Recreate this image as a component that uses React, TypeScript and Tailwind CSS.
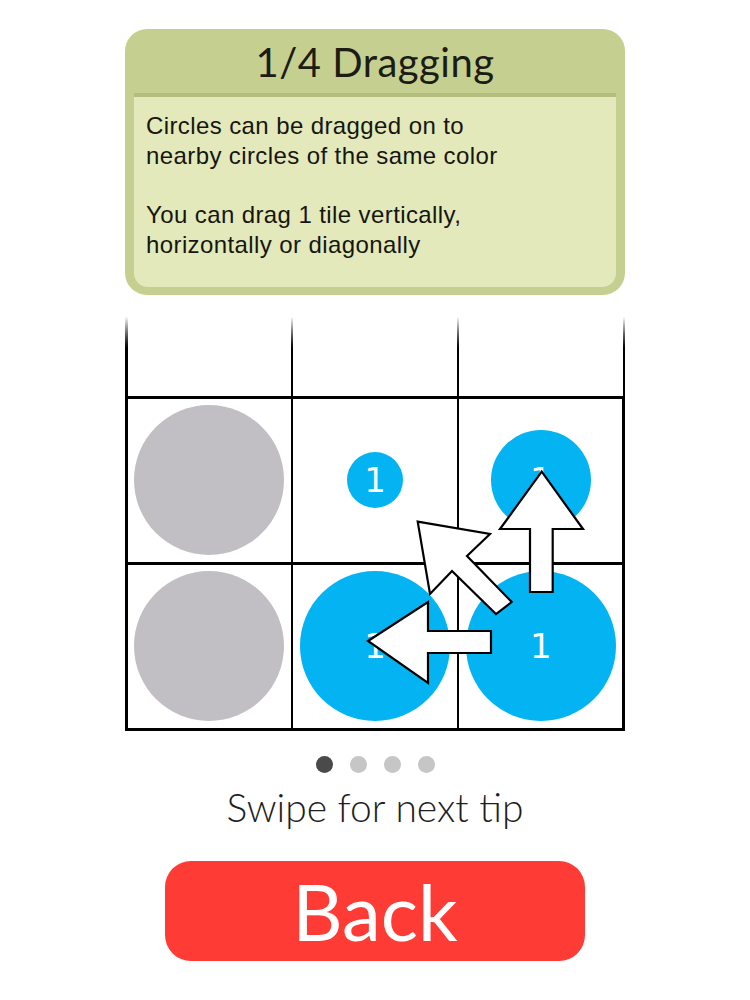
import React from 'react';

const cells = [
  { color: 'gray', size: 'w-[150px] h-[150px]', num: false },
  { color: 'blue', size: 'w-[56px] h-[56px]', num: true },
  { color: 'blue', size: 'w-[100px] h-[100px]', num: true },
  { color: 'gray', size: 'w-[150px] h-[150px]', num: false },
  { color: 'blue', size: 'w-[150px] h-[150px]', num: true },
  { color: 'blue', size: 'w-[150px] h-[150px]', num: true },
];

function Arrows() {
  return (
    <svg
      className="absolute left-0 top-0 pointer-events-none"
      width="500"
      height="415"
      viewBox="125 315 500 415"
    >
      <g fill="#ffffff" stroke="#000000" strokeWidth="2.2" strokeLinejoin="miter">
        <polygon points="417.7,521.7 490,534 467,556 511.7,602 496,614 452,571 430,594" />
        <polygon points="368,641 428,602 428,631 491,631 491,653 428,653 428,683" />
        <polygon points="541.7,471.7 583,529 552.7,529 552.7,592 530,592 530,529 500,529" />
      </g>
    </svg>
  );
}

export default function App() {
  return (
    <div className="w-[750px] h-[1000px] bg-white flex flex-col items-center overflow-hidden">
      {/* tip card */}
      <div className="mt-[29px] w-[500px] h-[266px] rounded-[22px] bg-[#c5d090] px-[9px] pb-[8px] flex flex-col">
        <div className="h-[64px] flex items-center justify-center">
          <h1 className="text-[40px] leading-none text-[#1c1c14] font-[Lato,sans-serif] tracking-[0.5px] mt-[2px]">
            1/4 Dragging
          </h1>
        </div>
        <div className="h-[4px] bg-[#b3bd7c]" />
        <div className="flex-1 bg-[#e3e9bb] rounded-b-[14px] px-[12px] pt-[14px] text-[24px] leading-[29.5px] tracking-[0.4px] text-[#161610] font-['Liberation_Sans',Arial,sans-serif]">
          <p>Circles can be dragged on to</p>
          <p>nearby circles of the same color</p>
          <p className="mt-[30px]">You can drag 1 tile vertically,</p>
          <p>horizontally or diagonally</p>
        </div>
      </div>

      {/* board */}
      <div className="relative mt-[20px] w-[500px]">
        <div className="h-[81px] flex">
          {[0, 1, 2, 3].map((i) => (
            <React.Fragment key={i}>
              <div className="w-[2.5px] h-full bg-gradient-to-b from-white from-[2%] to-black to-[45%]" />
              {i < 3 && <div className="w-[163.5px]" />}
            </React.Fragment>
          ))}
        </div>
        <div className="grid grid-cols-3 gap-[2.5px] bg-black p-[2.5px]">
          {cells.map((c, i) => (
            <div key={i} className="h-[163.5px] bg-white flex items-center justify-center">
              <div
                className={`${c.size} rounded-full flex items-center justify-center ${
                  c.color === 'gray' ? 'bg-[#c1bfc3]' : 'bg-[#04b4f2]'
                }`}
              >
                {c.num && (
                  <span className="text-white text-[34px] font-normal leading-none font-['DejaVu_Sans',sans-serif]">
                    1
                  </span>
                )}
              </div>
            </div>
          ))}
        </div>
        <Arrows />
      </div>

      {/* pager */}
      <div className="mt-[25px] flex gap-[17px]">
        <div className="w-[17px] h-[17px] rounded-full bg-[#4a4a4a]" />
        <div className="w-[17px] h-[17px] rounded-full bg-[#c6c6c6]" />
        <div className="w-[17px] h-[17px] rounded-full bg-[#c6c6c6]" />
        <div className="w-[17px] h-[17px] rounded-full bg-[#c6c6c6]" />
      </div>
      <p className="mt-[10px] text-[39px] leading-[48px] font-light text-[#1e1e1e] font-[Lato,sans-serif]">
        Swipe for next tip
      </p>

      <button className="mt-[30px] w-[420px] h-[100px] rounded-[26px] bg-[#fe3b35] text-white text-[78px] leading-none font-[Lato,sans-serif] flex items-center justify-center">
        Back
      </button>
    </div>
  );
}
